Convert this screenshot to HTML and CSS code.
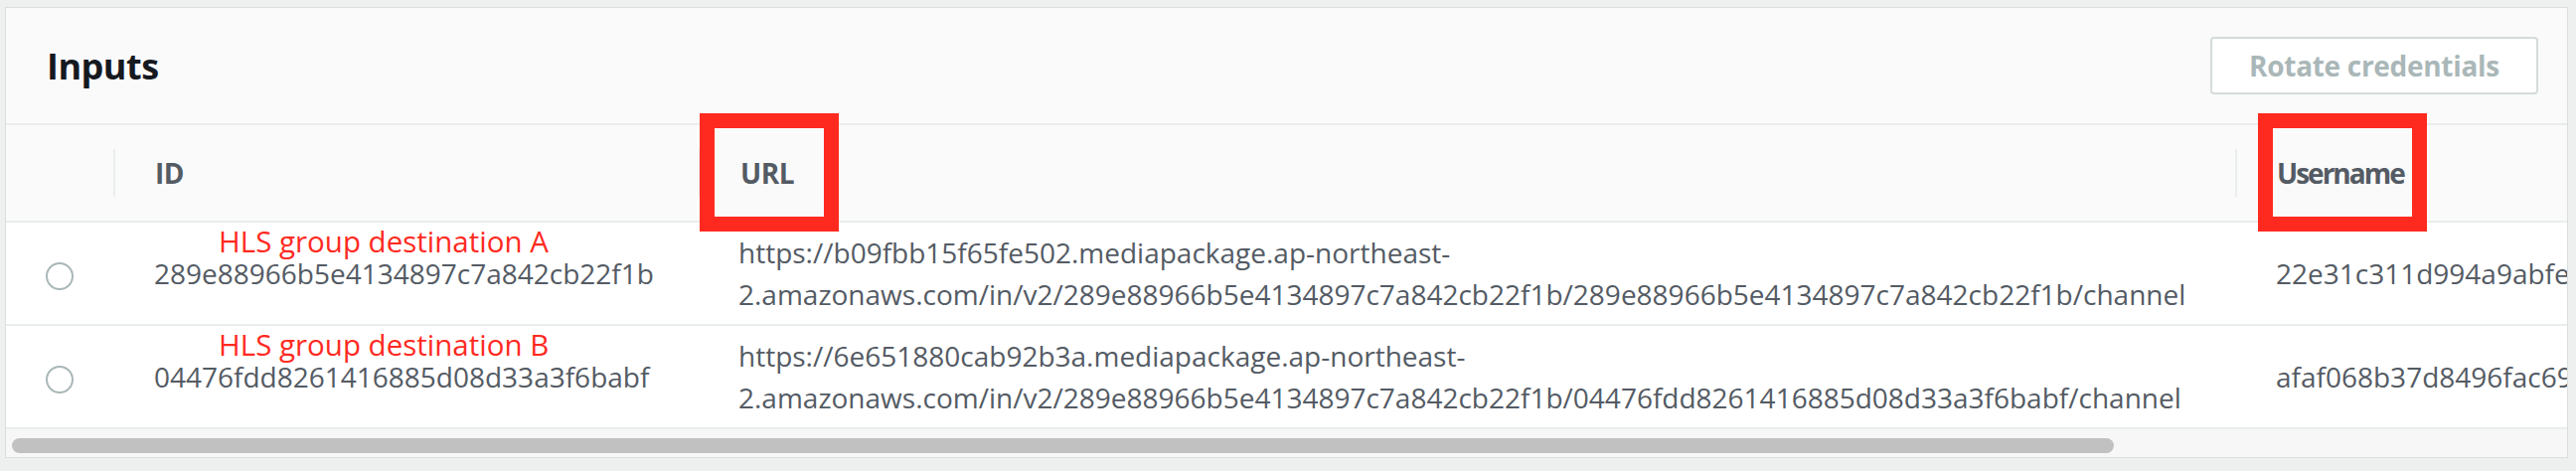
FILE: index.html
```html
<!DOCTYPE html>
<html lang="en">
<head>
<meta charset="utf-8">
<title>Inputs</title>
<link rel="stylesheet" href="styles.css">
</head>
<body>
<section class="card">
  <header class="card-head">
    <h2 class="title">Inputs</h2>
    <button class="btn" type="button" disabled>Rotate credentials</button>
  </header>
  <table class="grid">
    <colgroup>
      <col class="c-sel"><col class="c-id"><col class="c-url"><col class="c-user">
    </colgroup>
    <thead>
      <tr>
        <th class="sel"></th>
        <th><span class="hd">ID</span></th>
        <th><span class="hd">URL</span><span class="mark mark-url"></span></th>
        <th><span class="hd hd-user">Username</span><span class="mark mark-user"></span></th>
      </tr>
    </thead>
    <tbody>
      <tr>
        <td class="sel"><span class="radio"></span></td>
        <td><div class="idwrap"><span class="note">HLS group destination A</span>289e88966b5e4134897c7a842cb22f1b</div></td>
        <td class="url">https://b09fbb15f65fe502.mediapackage.ap-northeast-<br>2.amazonaws.com/in/v2/289e88966b5e4134897c7a842cb22f1b/289e88966b5e4134897c7a842cb22f1b/channel</td>
        <td>22e31c311d994a9abfe4c1c2d8e7a305</td>
      </tr>
      <tr>
        <td class="sel"><span class="radio"></span></td>
        <td><div class="idwrap"><span class="note">HLS group destination B</span>04476fdd8261416885d08d33a3f6babf</div></td>
        <td class="url">https://6e651880cab92b3a.mediapackage.ap-northeast-<br>2.amazonaws.com/in/v2/289e88966b5e4134897c7a842cb22f1b/04476fdd8261416885d08d33a3f6babf/channel</td>
        <td>afaf068b37d8496fac69b1e0c5d23f47</td>
      </tr>
    </tbody>
  </table>
  <div class="track"><div class="thumb"></div></div>
</section>
</body>
</html>
```
FILE: styles.css
```css
html, body {
  background: #eef0f0;
}
body {
  margin: 7px 8px 0 5px;
  font-family: "Open Sans", "Noto Sans", "Liberation Sans", sans-serif;
  color: #545b64;
}
.card {
  background: #fafafa;
  border: 1px solid #d9dede;
  box-shadow: 0 1px 1px rgba(0, 28, 36, 0.35);
  overflow: hidden;
  height: 454px;
  box-sizing: border-box;
}
.card-head {
  height: 118px;
  display: flex;
  align-items: center;
  justify-content: space-between;
  padding: 0 29px 0 41px;
  box-sizing: border-box;
  border-bottom: 2px solid #eaeded;
}
.title {
  margin: 0;
  font-size: 36px;
  font-weight: 700;
  color: #16191f;
  letter-spacing: -0.5px;
}
.btn {
  font-family: inherit;
  font-size: 28px;
  font-weight: 700;
  color: #aab7b8;
  background: #fff;
  border: 2px solid #d5dbdb;
  border-radius: 4px;
  height: 58px;
  width: 330px;
  padding: 0;
  letter-spacing: -0.3px;
}
.grid {
  table-layout: fixed;
  border-collapse: collapse;
  width: 2943px;
  font-size: 28px;
}
.c-sel { width: 108px; }
.c-id { width: 589px; }
.c-url { width: 1546px; }
.c-user { width: 700px; }
th {
  height: 96px;
  padding: 0 0 0 42px;
  text-align: left;
  font-weight: 700;
  line-height: 33px;
  color: #545b64;
  position: relative;
  border-bottom: 2px solid #eaeded;
  background: #fafafa;
}
th::before {
  content: "";
  position: absolute;
  left: 0;
  top: 24px;
  bottom: 24px;
  width: 2px;
  background: #eaeded;
}
th.sel::before { display: none; }
th.sel, td.sel { padding: 0; }
.hd { letter-spacing: -0.5px; }
.hd-user { letter-spacing: -2px; }
.mark {
  position: absolute;
  border: 15px solid #ff2a1f;
  top: -12px;
  height: 89px;
  z-index: 2;
}
.mark-url { left: 1px; width: 110px; }
.mark-user { left: 23px; width: 140px; }
td {
  height: 102px;
  padding: 0 0 0 41px;
  background: #fff;
  border-bottom: 2px solid #eaeded;
  vertical-align: middle;
  line-height: 33px;
  white-space: nowrap;
  color: #545b64;
}
td.url { line-height: 42px; padding-left: 40px; }
td.sel { text-align: center; }
.radio {
  display: inline-block;
  width: 28px;
  height: 28px;
  border: 2px solid #aab7b8;
  border-radius: 50%;
  box-sizing: border-box;
  vertical-align: middle;
}
.idwrap {
  position: relative;
}
.note {
  position: absolute;
  left: 65px;
  bottom: 100%;
  font-size: 29.5px;
  color: #ff2a1f;
  white-space: nowrap;
}
.track {
  height: 28px;
  padding: 9px 0 0 6px;
  box-sizing: border-box;
  background: #f7f7f7;
}
.thumb {
  width: 2115px;
  height: 15px;
  border-radius: 8px;
  background: #c1c1c1;
}
```
